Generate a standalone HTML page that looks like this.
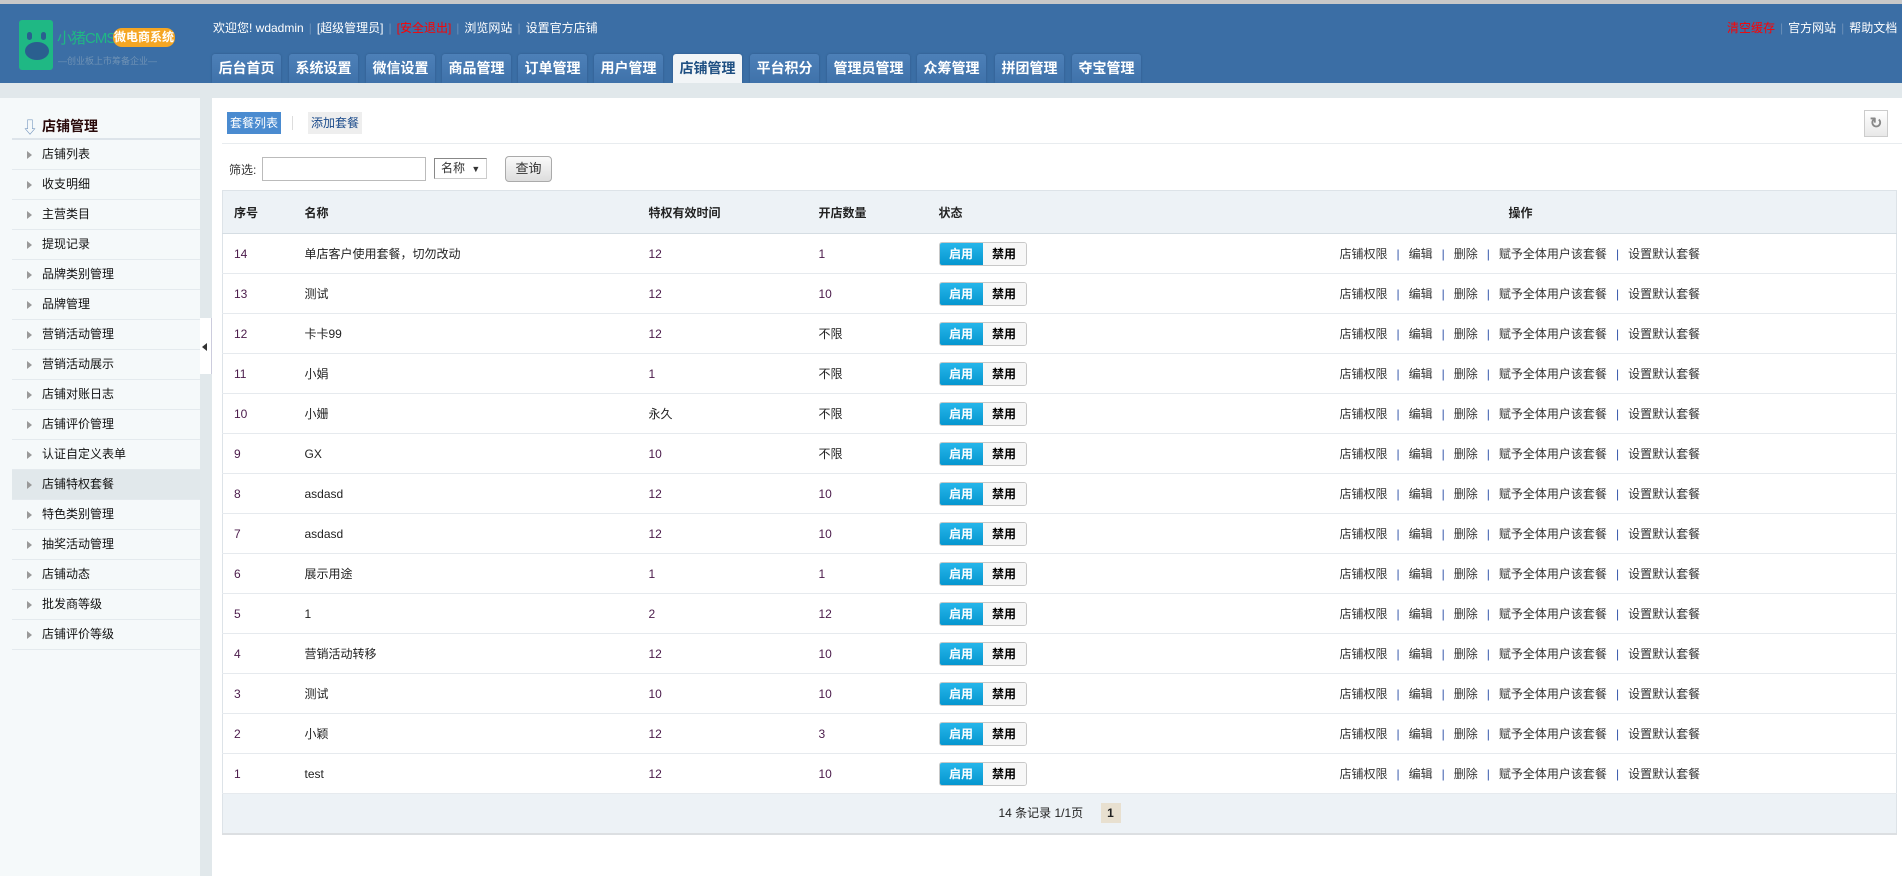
<!DOCTYPE html>
<html><head><meta charset="utf-8">
<style>
*{margin:0;padding:0;box-sizing:border-box}
body{width:1902px;height:876px;overflow:hidden;background:#fff;font-family:"Liberation Sans","Noto Sans CJK SC",sans-serif;font-size:12px;color:#333;position:relative}
.a{position:absolute}
#top{left:0;top:0;width:1902px;height:4px;background:#c8c8c8}
#hd{left:0;top:4px;width:1902px;height:79px;background:#3b6ea5}
#band{left:0;top:83px;width:1902px;height:15px;background:#e1e8eb}
.tab{position:absolute;top:54px;height:29px;width:69px;background:linear-gradient(#4d80b8,#3f72aa);border-radius:3px 3px 0 0;color:#fff;font-size:14px;font-weight:bold;text-align:center;line-height:29px;box-shadow:0 0 2px #2d5a8a}
.tab.on{background:#f2f5f7;color:#1e4f82}
.wel{top:20px;left:213px;color:#fff;font-size:12px;line-height:16px;white-space:nowrap}
.wel span.s{color:#6a8fb8;margin:0 5px}
#side{left:0;top:98px;width:200px;height:778px;background:#f5f9fa}
#strip{left:200px;top:98px;width:12px;height:778px;background:#e1e8eb}
.si{position:absolute;left:12px;width:188px;height:30px;border-bottom:1px solid #e4eaee;line-height:29px;padding-left:30px;color:#111;font-size:12px}
.si:before{content:"";position:absolute;left:15px;top:11px;width:0;height:0;border:4px solid transparent;border-left:5px solid #999}
.si.on{background:#e1e8eb}
table{position:absolute;left:222px;top:190px;width:1675px;border-collapse:collapse;border:1px solid #dde3e8}
td,th{height:40px;border-bottom:1px solid #e6eaee;text-align:left;font-size:12px;font-weight:normal;color:#222;white-space:nowrap}
th{height:43px;background:#edf2f6;font-weight:bold;border-bottom:1px solid #d5dde3}
.n{color:#4a1a4a}
.b{display:inline-block;border:1px solid #c8c8c8;border-radius:3px;height:24px;overflow:hidden;vertical-align:middle}
.b i{font-style:normal;display:inline-block;width:43px;height:22px;line-height:22px;text-align:center;font-weight:bold;font-size:12px;float:left}
.b i.e{background:linear-gradient(#27b6ea,#0596cf);color:#fff}
.b i.d{background:#f7f7f7;color:#000}
.op{color:#333;padding-left:11px}
.op b{font-weight:normal;color:#3355aa;margin:0 9px}
</style></head><body>
<div class="a" id="top"></div>
<div class="a" id="hd"></div>
<div class="a" style="left:19px;top:20px;width:34px;height:50px;background:#1fb884;border-radius:3px"></div>
<div class="a" style="left:27px;top:32px;width:5px;height:8px;background:#2a5f8f;border-radius:3px"></div>
<div class="a" style="left:41px;top:32px;width:5px;height:8px;background:#2a5f8f;border-radius:3px"></div>
<div class="a" style="left:25px;top:42px;width:24px;height:18px;background:#2a5f8f;border-radius:50%"></div>
<div class="a" style="left:57px;top:29px;color:#1fb884;font-size:15px;line-height:20px;letter-spacing:-1px">小猪CMS</div>
<div class="a" style="left:113px;top:28px;width:62px;height:19px;background:#f5a623;border-radius:9px;color:#fff;font-size:12px;line-height:19px;text-align:center;font-weight:bold">微电商系统</div>
<div class="a" style="left:58px;top:54px;color:#6f92b5;font-size:9px;line-height:14px;white-space:nowrap">—创业板上市筹备企业—</div>
<div class="a wel">欢迎您! wdadmin<span class="s">|</span>[超级管理员]<span class="s">|</span><span style="color:#f00">[安全退出]</span><span class="s">|</span>浏览网站<span class="s">|</span>设置官方店铺</div>
<div class="a wel" style="left:1727px"><span style="color:#f00">清空缓存</span><span class="s">|</span>官方网站<span class="s">|</span>帮助文档</div>
<div class="tab" style="left:212px">后台首页</div>
<div class="tab" style="left:289px">系统设置</div>
<div class="tab" style="left:366px">微信设置</div>
<div class="tab" style="left:442px">商品管理</div>
<div class="tab" style="left:518px">订单管理</div>
<div class="tab" style="left:594px">用户管理</div>
<div class="tab on" style="left:673px">店铺管理</div>
<div class="tab" style="left:750px">平台积分</div>
<div class="tab" style="left:827px;width:83px">管理员管理</div>
<div class="tab" style="left:917px">众筹管理</div>
<div class="tab" style="left:995px">拼团管理</div>
<div class="tab" style="left:1072px">夺宝管理</div>
<div class="a" id="band"></div>
<div class="a" id="side"></div>
<div class="a" id="strip"></div>
<div class="a" style="left:200px;top:318px;width:12px;height:56px;background:#fff;border-right:1px solid #ccd"></div>
<div class="a" style="left:202px;top:343px;width:0;height:0;border:4px solid transparent;border-right:5px solid #333;border-left:0"></div>
<div class="a" style="left:12px;top:110px;width:188px;height:30px;border-bottom:2px solid #dde4ea"></div>
<div class="a" style="left:22px;top:114px;color:#7a9ac0;font-size:16px">⇩</div>
<div class="a" style="left:42px;top:116px;font-size:14px;font-weight:bold;color:#2a0a0a">店铺管理</div>
<div class="si" style="top:140px">店铺列表</div>
<div class="si" style="top:170px">收支明细</div>
<div class="si" style="top:200px">主营类目</div>
<div class="si" style="top:230px">提现记录</div>
<div class="si" style="top:260px">品牌类别管理</div>
<div class="si" style="top:290px">品牌管理</div>
<div class="si" style="top:320px">营销活动管理</div>
<div class="si" style="top:350px">营销活动展示</div>
<div class="si" style="top:380px">店铺对账日志</div>
<div class="si" style="top:410px">店铺评价管理</div>
<div class="si" style="top:440px">认证自定义表单</div>
<div class="si on" style="top:470px">店铺特权套餐</div>
<div class="si" style="top:500px">特色类别管理</div>
<div class="si" style="top:530px">抽奖活动管理</div>
<div class="si" style="top:560px">店铺动态</div>
<div class="si" style="top:590px">批发商等级</div>
<div class="si" style="top:620px">店铺评价等级</div>
<div class="a" style="left:227px;top:112px;width:54px;height:22px;background:#4a8bd0;color:#fff;line-height:22px;text-align:center">套餐列表</div>
<div class="a" style="left:292px;top:116px;width:1px;height:14px;background:#ddd"></div>
<div class="a" style="left:308px;top:112px;width:54px;height:22px;background:#eee;color:#1a4a8a;line-height:22px;text-align:center">添加套餐</div>
<div class="a" style="left:1864px;top:110px;width:24px;height:27px;border:1px solid #ccc;background:linear-gradient(#fff,#e8e8e8);color:#888;text-align:center;line-height:25px;font-size:15px;font-weight:bold">↻</div>
<div class="a" style="left:222px;top:143px;width:1680px;height:1px;background:#e8ecef"></div>
<div class="a" style="left:229px;top:161px">筛选:</div>
<div class="a" style="left:262px;top:157px;width:164px;height:24px;border:1px solid #bbb"></div>
<div class="a" style="left:434px;top:158px;width:53px;height:21px;border:1px solid #999;border-color:#888 #ccc #ccc #888;padding-left:6px;line-height:19px">名称 <span style="font-size:9px;margin-left:3px">▼</span></div>
<div class="a" style="left:505px;top:156px;width:47px;height:26px;border:1px solid #aaa;border-radius:4px;background:linear-gradient(#fafafa,#ddd);text-align:center;line-height:24px;font-size:13px">查询</div>
<table>
<tr><th style="width:82px;padding-left:11px">序号</th><th style="width:344px">名称</th><th style="width:170px">特权有效时间</th><th style="width:120px">开店数量</th><th style="width:390px">状态</th><th style="padding-left:180px">操作</th></tr>
<tr><td style="padding-left:11px" class="n">14</td><td>单店客户使用套餐，切勿改动</td><td class="n">12</td><td class="n">1</td><td><span class="b"><i class="e">启用</i><i class="d">禁用</i></span></td><td class="op">店铺权限<b>|</b>编辑<b>|</b>删除<b>|</b>赋予全体用户该套餐<b>|</b>设置默认套餐</td></tr>
<tr><td style="padding-left:11px" class="n">13</td><td>测试</td><td class="n">12</td><td class="n">10</td><td><span class="b"><i class="e">启用</i><i class="d">禁用</i></span></td><td class="op">店铺权限<b>|</b>编辑<b>|</b>删除<b>|</b>赋予全体用户该套餐<b>|</b>设置默认套餐</td></tr>
<tr><td style="padding-left:11px" class="n">12</td><td>卡卡99</td><td class="n">12</td><td>不限</td><td><span class="b"><i class="e">启用</i><i class="d">禁用</i></span></td><td class="op">店铺权限<b>|</b>编辑<b>|</b>删除<b>|</b>赋予全体用户该套餐<b>|</b>设置默认套餐</td></tr>
<tr><td style="padding-left:11px" class="n">11</td><td>小娟</td><td class="n">1</td><td>不限</td><td><span class="b"><i class="e">启用</i><i class="d">禁用</i></span></td><td class="op">店铺权限<b>|</b>编辑<b>|</b>删除<b>|</b>赋予全体用户该套餐<b>|</b>设置默认套餐</td></tr>
<tr><td style="padding-left:11px" class="n">10</td><td>小姗</td><td>永久</td><td>不限</td><td><span class="b"><i class="e">启用</i><i class="d">禁用</i></span></td><td class="op">店铺权限<b>|</b>编辑<b>|</b>删除<b>|</b>赋予全体用户该套餐<b>|</b>设置默认套餐</td></tr>
<tr><td style="padding-left:11px" class="n">9</td><td>GX</td><td class="n">10</td><td>不限</td><td><span class="b"><i class="e">启用</i><i class="d">禁用</i></span></td><td class="op">店铺权限<b>|</b>编辑<b>|</b>删除<b>|</b>赋予全体用户该套餐<b>|</b>设置默认套餐</td></tr>
<tr><td style="padding-left:11px" class="n">8</td><td>asdasd</td><td class="n">12</td><td class="n">10</td><td><span class="b"><i class="e">启用</i><i class="d">禁用</i></span></td><td class="op">店铺权限<b>|</b>编辑<b>|</b>删除<b>|</b>赋予全体用户该套餐<b>|</b>设置默认套餐</td></tr>
<tr><td style="padding-left:11px" class="n">7</td><td>asdasd</td><td class="n">12</td><td class="n">10</td><td><span class="b"><i class="e">启用</i><i class="d">禁用</i></span></td><td class="op">店铺权限<b>|</b>编辑<b>|</b>删除<b>|</b>赋予全体用户该套餐<b>|</b>设置默认套餐</td></tr>
<tr><td style="padding-left:11px" class="n">6</td><td>展示用途</td><td class="n">1</td><td class="n">1</td><td><span class="b"><i class="e">启用</i><i class="d">禁用</i></span></td><td class="op">店铺权限<b>|</b>编辑<b>|</b>删除<b>|</b>赋予全体用户该套餐<b>|</b>设置默认套餐</td></tr>
<tr><td style="padding-left:11px" class="n">5</td><td>1</td><td class="n">2</td><td class="n">12</td><td><span class="b"><i class="e">启用</i><i class="d">禁用</i></span></td><td class="op">店铺权限<b>|</b>编辑<b>|</b>删除<b>|</b>赋予全体用户该套餐<b>|</b>设置默认套餐</td></tr>
<tr><td style="padding-left:11px" class="n">4</td><td>营销活动转移</td><td class="n">12</td><td class="n">10</td><td><span class="b"><i class="e">启用</i><i class="d">禁用</i></span></td><td class="op">店铺权限<b>|</b>编辑<b>|</b>删除<b>|</b>赋予全体用户该套餐<b>|</b>设置默认套餐</td></tr>
<tr><td style="padding-left:11px" class="n">3</td><td>测试</td><td class="n">10</td><td class="n">10</td><td><span class="b"><i class="e">启用</i><i class="d">禁用</i></span></td><td class="op">店铺权限<b>|</b>编辑<b>|</b>删除<b>|</b>赋予全体用户该套餐<b>|</b>设置默认套餐</td></tr>
<tr><td style="padding-left:11px" class="n">2</td><td>小颖</td><td class="n">12</td><td class="n">3</td><td><span class="b"><i class="e">启用</i><i class="d">禁用</i></span></td><td class="op">店铺权限<b>|</b>编辑<b>|</b>删除<b>|</b>赋予全体用户该套餐<b>|</b>设置默认套餐</td></tr>
<tr><td style="padding-left:11px" class="n">1</td><td>test</td><td class="n">12</td><td class="n">10</td><td><span class="b"><i class="e">启用</i><i class="d">禁用</i></span></td><td class="op">店铺权限<b>|</b>编辑<b>|</b>删除<b>|</b>赋予全体用户该套餐<b>|</b>设置默认套餐</td></tr>
<tr><td colspan="6" style="background:#edf2f6;text-align:center;border-bottom:2px solid #dcdfe2"><span style="font-size:12px;color:#222">14 条记录 1/1页 <span style="display:inline-block;width:20px;height:20px;line-height:20px;background:#e8e0d0;margin-left:14px;font-weight:bold">1</span></span></td></tr>
</table>
</body></html>
